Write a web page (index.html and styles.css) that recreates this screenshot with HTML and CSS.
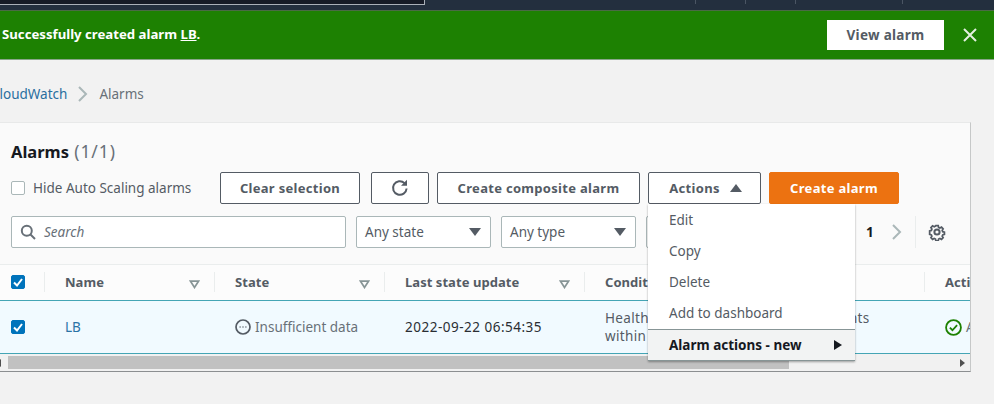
FILE: index.html
```html
<!DOCTYPE html>
<html lang="en">
<head>
    <meta charset="UTF-8">
    <meta name="viewport" content="width=device-width, initial-scale=1.0">
    <title>Alarms | CloudWatch</title>
    <link rel="stylesheet" href="styles.css">
</head>

<body>
    <header class="topbar">
        <div class="topbar-search"></div>
        <div class="topbar-item topbar-first"></div>
        <div class="topbar-item"></div>
        <div class="topbar-item topbar-wide"></div>
        <div class="topbar-item"></div>
    </header>

    <div class="flash">
        <p class="flash-text">Successfully created alarm <a href="#">LB</a>.</p>
        <button class="flash-btn">View alarm</button>
        <svg class="flash-close" width="16" height="16" viewBox="0 0 16 16"><path d="M2 2l12 12M14 2L2 14"/></svg>
    </div>

    <nav class="breadcrumb">
        <a href="#">CloudWatch</a>
        <svg class="crumb-arrow" width="12" height="18" viewBox="0 0 12 18"><path d="M2 2l7 7-7 7"/></svg>
        <span>Alarms</span>
    </nav>

    <main class="panel">
        <h2 class="panel-title">Alarms <span>(1/1)</span></h2>

        <div class="toolbar">
            <label class="hide-scaling"><span class="box"></span>Hide Auto Scaling alarms</label>
            <button class="btn btn-clear">Clear selection</button>
            <button class="btn btn-refresh">
                <svg width="18" height="18" viewBox="0 0 18 18"><path d="M15.6 9.5a6.8 6.8 0 1 1-2.1-5.4"/><path class="solid" d="M16 .8v6h-6z"/></svg>
            </button>
            <button class="btn btn-composite">Create composite alarm</button>
            <div class="actions">
                <button class="btn btn-actions">Actions <i class="tri-up"></i></button>
                <ul class="menu">
                    <li>Edit</li>
                    <li>Copy</li>
                    <li>Delete</li>
                    <li>Add to dashboard</li>
                    <li class="menu-active">Alarm actions - new <i class="tri-right"></i></li>
                </ul>
            </div>
            <button class="btn btn-primary">Create alarm</button>
        </div>

        <div class="filters">
            <div class="search">
                <svg width="16" height="16" viewBox="0 0 16 16"><circle cx="6.8" cy="6.8" r="5"/><path d="M10.5 10.5l4.5 4.5"/></svg>
                <span>Search</span>
            </div>
            <div class="select">Any state <i class="tri-down"></i></div>
            <div class="select">Any type <i class="tri-down"></i></div>
            <div class="select select-hidden"></div>
            <div class="pager">
                <b>1</b>
                <svg class="crumb-arrow" width="12" height="18" viewBox="0 0 12 18"><path d="M2 2l7 7-7 7"/></svg>
            </div>
            <div class="settings">
                <svg width="18" height="18" viewBox="0 0 18 18"><circle cx="9" cy="9" r="2.6"/><path d="M7.6 1.5h2.8l.4 2.1 1.5.7 1.9-1 1.9 2-1.1 1.8.6 1.5 2 .5v2.7l-2 .5-.6 1.5 1.1 1.8-1.9 1.9-1.9-1-1.5.6-.4 2.1H7.6l-.4-2.1-1.5-.6-1.9 1-1.9-1.9 1.1-1.8-.6-1.5-2-.5V7.6l2-.5.6-1.5-1.1-1.8 1.9-2 1.9 1 1.5-.7z" transform="translate(1.3 1.3) scale(.86)"/></svg>
            </div>
        </div>

        <div class="table">
            <div class="row row-head">
                <div class="cell col-check"><span class="box box-on"><svg width="14" height="14" viewBox="0 0 14 14"><path d="M3 7.5l3 3 5-6.5"/></svg></span></div>
                <div class="cell col-name">Name <svg class="sort" width="11" height="9" viewBox="0 0 11 9"><path d="M1.5 1.2h8l-4 6.3z"/></svg></div>
                <div class="cell col-state">State <svg class="sort" width="11" height="9" viewBox="0 0 11 9"><path d="M1.5 1.2h8l-4 6.3z"/></svg></div>
                <div class="cell col-update">Last state update <svg class="sort" width="11" height="9" viewBox="0 0 11 9"><path d="M1.5 1.2h8l-4 6.3z"/></svg></div>
                <div class="cell col-cond">Conditions</div>
                <div class="cell col-act">Actions</div>
            </div>
            <div class="row row-body">
                <div class="cell col-check"><span class="box box-on"><svg width="14" height="14" viewBox="0 0 14 14"><path d="M3 7.5l3 3 5-6.5"/></svg></span></div>
                <div class="cell col-name"><a href="#">LB</a></div>
                <div class="cell col-state state-text">
                    <svg width="16" height="16" viewBox="0 0 16 16"><circle cx="8" cy="8" r="7"/><path class="dots" d="M4.6 8h1M7.5 8h1M10.4 8h1"/></svg>
                    Insufficient data
                </div>
                <div class="cell col-update date-text">2022-09-22 06:54:35</div>
                <div class="cell col-cond cond-text">HealthyHostCount &gt;= 2 for 1 datapoints<br>within 5 minutes</div>
                <div class="cell col-act act-text">
                    <svg width="17" height="17" viewBox="0 0 16 16"><circle cx="8" cy="8" r="7"/><path d="M4.6 8.2l2.4 2.4 4.4-4.8"/></svg>
                    Actions enabled
                </div>
            </div>
        </div>

        <div class="scrollbar">
            <i class="scroll-left"></i>
            <div class="scroll-thumb"></div>
            <i class="scroll-right"></i>
        </div>
    </main>
</body>
</html>
```

FILE: styles.css
```css
body {
    font-family: "Noto Sans", Arial, sans-serif;
    font-size: 14px;
    margin: 0;
    padding: 0;
    height: 404px;
    overflow: hidden;
    background-color: #f2f2f2;
    color: #16191f;
}

i {
    display: block;
    font-style: normal;
}

a {
    color: #0073bb;
    text-decoration: none;
}

.topbar {
    display: flex;
    height: 10px;
    background: #232f3e;
}

.topbar-search {
    width: 424px;
    height: 4px;
    background: #161b26;
    border-right: 1px solid #aab0b8;
    border-bottom: 1px solid #aab0b8;
}

.topbar-item {
    box-sizing: border-box;
    width: 50px;
    height: 4px;
    border-left: 1px solid #4a5563;
}

.topbar-first {
    margin-left: 270px;
}

.topbar-wide {
    width: 107px;
}

.flash {
    display: flex;
    align-items: center;
    box-sizing: border-box;
    height: 50px;
    padding-left: 2px;
    background: #1d8102;
    border-top: 1px solid #4a6a45;
    border-bottom: 1px solid #8aa68a;
}

.flash-text {
    flex: 1;
    margin: 0;
    padding-bottom: 2px;
    color: #fff;
    font-weight: 700;
    font-size: 13.2px;
}

.flash-text a {
    color: #fff;
    text-decoration: underline;
}

.flash-btn {
    width: 117px;
    height: 30px;
    margin-right: 18px;
    padding: 0;
    border: none;
    background: #fff;
    color: #545b64;
    font: 700 13.5px "Noto Sans", Arial, sans-serif;
    letter-spacing: 0.3px;
}

.flash-close {
    margin-right: 16px;
    fill: none;
    stroke: #e4f0e0;
    stroke-width: 2;
}

.breadcrumb {
    display: flex;
    align-items: center;
    gap: 10px;
    box-sizing: border-box;
    height: 62px;
    padding-top: 6px;
    margin-left: -9px;
    font-size: 13.5px;
    color: #687078;
}

.breadcrumb a {
    color: #2a6f9f;
}

.crumb-arrow {
    fill: none;
    stroke: #aab7b8;
    stroke-width: 2;
}

.panel {
    position: relative;
    width: 971px;
    height: 250px;
    box-sizing: border-box;
    padding-top: 16px;
    background: #fafafa;
    border-top: 1px solid #e8e9e9;
    border-right: 1px solid #c6c8c8;
    border-bottom: 1px solid #8c8f91;
}

.panel-title {
    margin: 0 0 8px 11px;
    height: 25px;
    line-height: 25px;
    font-size: 16.5px;
    font-weight: 700;
}

.panel-title span {
    margin-left: 1px;
    font-weight: 400;
    font-size: 17.5px;
    letter-spacing: 0.9px;
    color: #687078;
}

.toolbar {
    display: flex;
    align-items: center;
    height: 32px;
    padding-left: 11px;
}

.hide-scaling {
    display: flex;
    align-items: center;
    gap: 8px;
    width: 209px;
    font-size: 13.5px;
    color: #545b64;
}

.box {
    display: block;
    box-sizing: border-box;
    width: 14px;
    height: 14px;
    background: #fff;
    border: 1px solid #aab7b8;
    border-radius: 2px;
}

.box-on {
    background: #0073bb;
    border-color: #0073bb;
}

.box-on svg {
    display: block;
    margin: -1px;
    fill: none;
    stroke: #fff;
    stroke-width: 2;
}

.btn {
    box-sizing: border-box;
    height: 32px;
    padding: 0;
    background: #fff;
    border: 1px solid #545b64;
    border-radius: 2px;
    color: #545b64;
    font: 700 13px "Noto Sans", Arial, sans-serif;
    letter-spacing: 0.3px;
}

.btn-clear {
    width: 140px;
    margin-right: 11px;
}

.btn-refresh {
    width: 58px;
    margin-right: 8px;
}

.btn-refresh svg {
    display: block;
    margin: 0 auto;
    fill: none;
    stroke: #545b64;
    stroke-width: 2;
}

.btn-refresh .solid {
    fill: #545b64;
    stroke: none;
}

.btn-composite {
    width: 203px;
    margin-right: 8px;
}

.actions {
    position: relative;
    margin-right: 8px;
}

.btn-actions {
    display: flex;
    align-items: center;
    justify-content: center;
    gap: 10px;
    width: 113px;
    padding-left: 2px;
}

.tri-up {
    width: 0;
    height: 0;
    border-left: 6px solid transparent;
    border-right: 6px solid transparent;
    border-bottom: 8px solid #545b64;
}

.tri-down {
    width: 0;
    height: 0;
    border-left: 6px solid transparent;
    border-right: 6px solid transparent;
    border-top: 8px solid #545b64;
}

.tri-right {
    width: 0;
    height: 0;
    border-top: 5px solid transparent;
    border-bottom: 5px solid transparent;
    border-left: 8px solid #16191f;
}

.btn-primary {
    width: 130px;
    background: #ec7211;
    border-color: #ec7211;
    color: #fff;
}

.menu {
    position: absolute;
    z-index: 5;
    top: 32px;
    left: 0;
    width: 207px;
    margin: 0;
    padding: 1px 0 0;
    list-style-type: none;
    background: #fff;
    box-shadow: 0 1px 2px rgba(0, 0, 0, 0.35);
    font-size: 13.5px;
    color: #545b64;
}

.menu li {
    box-sizing: border-box;
    height: 31px;
    line-height: 31px;
    padding: 0 21px;
}

.menu .menu-active {
    display: flex;
    align-items: center;
    justify-content: space-between;
    padding-right: 13px;
    height: 32px;
    background: #f2f3f3;
    border-top: 1px solid #879596;
    border-bottom: 1px solid #879596;
    color: #16191f;
    font-weight: 700;
}

.filters {
    display: flex;
    align-items: center;
    height: 32px;
    margin-top: 12px;
    padding-left: 11px;
}

.search,
.select {
    display: flex;
    align-items: center;
    box-sizing: border-box;
    height: 32px;
    background: #fff;
    border: 1px solid #aab7b8;
    border-radius: 2px;
    font-size: 13.5px;
    color: #545b64;
}

.search {
    gap: 8px;
    width: 335px;
    margin-right: 10px;
    padding-left: 8px;
}

.search svg {
    fill: none;
    stroke: #687078;
    stroke-width: 2;
}

.search span {
    font-style: italic;
    color: #687078;
    font-size: 13.5px;
}

.select {
    justify-content: space-between;
    width: 135px;
    margin-right: 10px;
    padding: 0 9px 0 8px;
}

.select-hidden {
    width: 40px;
    margin-right: 180px;
}

.pager {
    display: flex;
    align-items: center;
    gap: 17px;
    width: 49px;
    font-size: 13.5px;
}

.settings {
    display: flex;
    justify-content: flex-end;
    width: 31px;
    height: 32px;
    align-items: center;
    border-left: 1px solid #eaeded;
    box-sizing: border-box;
}

.settings svg {
    fill: none;
    stroke: #545b64;
    stroke-width: 2;
}

.table {
    margin-top: 16px;
    border-top: 1px solid #eaeded;
    overflow: hidden;
}

.row {
    display: flex;
    align-items: center;
}

.row-head {
    box-sizing: border-box;
    height: 35px;
    padding-bottom: 2px;
    background: #fcfcfc;
    font-size: 13px;
    font-weight: 700;
    color: #545b64;
    letter-spacing: 0.05px;
}

.row-body {
    box-sizing: border-box;
    height: 54px;
    background: #f1faff;
    border-top: 1px solid #44a5b5;
    border-bottom: 1px solid #44a5b5;
    font-size: 13.5px;
    color: #16191f;
}

.cell {
    display: flex;
    align-items: center;
    flex-shrink: 0;
    box-sizing: border-box;
    padding-left: 21px;
    height: 20px;
}

.row-head .cell + .cell {
    box-shadow: inset 1px 0 0 #eaeded;
}

.col-check { width: 44px; padding-left: 11px; }
.col-name { width: 170px; justify-content: space-between; padding-right: 14px; }
.col-state { width: 170px; justify-content: space-between; padding-right: 14px; }
.col-update { width: 200px; justify-content: space-between; padding-right: 14px; }
.col-cond { width: 340px; }
.col-act { width: 120px; white-space: nowrap; }

.sort {
    margin-top: 5px;
    fill: none;
    stroke: #879596;
    stroke-width: 1.7;
}

.col-name a {
    color: #2a73a5;
}

.state-text {
    justify-content: flex-start;
    gap: 4px;
    color: #687078;
}

.state-text svg {
    flex-shrink: 0;
    fill: none;
    stroke: #545b64;
    stroke-width: 1.7;
}

.state-text .dots {
    stroke-width: 1.6;
}

.date-text {
    letter-spacing: 0.5px;
    color: #2a2e33;
}

.cond-text {
    display: block;
    height: auto;
    line-height: 18px;
    letter-spacing: 0.35px;
    color: #545b64;
    white-space: nowrap;
}

.act-text {
    gap: 4px;
    color: #687078;
}

.act-text svg {
    flex-shrink: 0;
    fill: none;
    stroke: #1d8102;
    stroke-width: 1.7;
}

.scrollbar {
    display: flex;
    align-items: center;
    height: 17px;
    background: #f1f1f1;
}

.scroll-left {
    width: 0;
    height: 0;
    margin-left: -4px;
    margin-right: 7px;
    border-top: 4px solid transparent;
    border-bottom: 4px solid transparent;
    border-right: 5px solid #505050;
}

.scroll-thumb {
    width: 781px;
    height: 13px;
    background: #c1c1c1;
}

.scroll-right {
    margin-left: 171px;
    width: 0;
    height: 0;
    border-top: 4px solid transparent;
    border-bottom: 4px solid transparent;
    border-left: 5px solid #505050;
}
```
